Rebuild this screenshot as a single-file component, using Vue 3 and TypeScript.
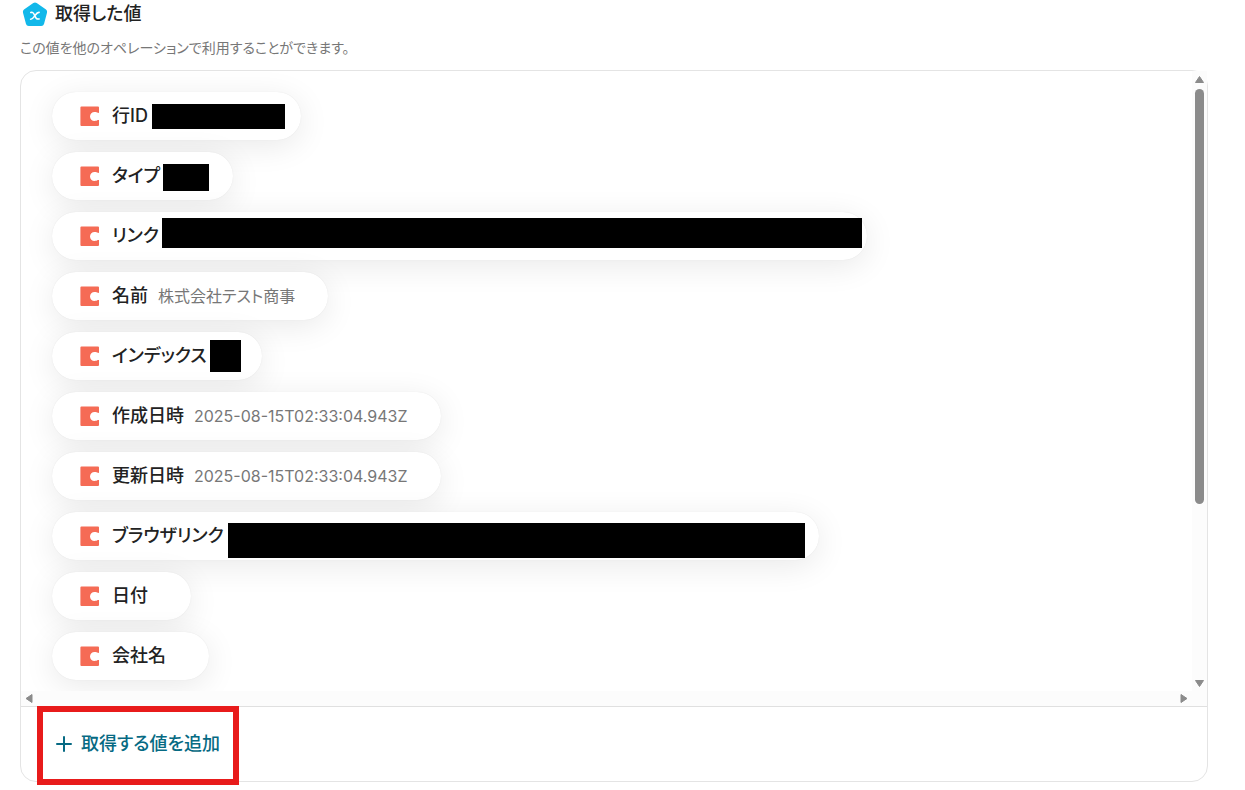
<script setup lang="ts">
interface Mask {
  left: number
  top: number
  width: number
  height: number
}

interface FetchedValue {
  label: string
  value?: string
  mask?: Mask
  minWidth?: number
}

const values: FetchedValue[] = [
  { label: '行ID', mask: { left: 100, top: 12, width: 133, height: 25 }, minWidth: 249 },
  { label: 'タイプ', mask: { left: 111, top: 12, width: 46, height: 27 }, minWidth: 181 },
  { label: 'リンク', mask: { left: 110, top: 6, width: 700, height: 30 }, minWidth: 815 },
  { label: '名前', value: '株式会社テスト商事' },
  { label: 'インデックス', mask: { left: 158, top: 8, width: 31, height: 32 }, minWidth: 210 },
  { label: '作成日時', value: '2025-08-15T02:33:04.943Z' },
  { label: '更新日時', value: '2025-08-15T02:33:04.943Z' },
  { label: 'ブラウザリンク', mask: { left: 176, top: 11, width: 577, height: 35 }, minWidth: 767 },
  { label: '日付' },
  { label: '会社名' },
]

function pillStyle(item: FetchedValue) {
  return item.minWidth ? { minWidth: `${item.minWidth}px` } : undefined
}

function maskStyle(mask: Mask) {
  return {
    left: `${mask.left}px`,
    top: `${mask.top}px`,
    width: `${mask.width}px`,
    height: `${mask.height}px`,
  }
}
</script>

<template>
  <main class="page">
    <header class="heading">
      <svg class="badge" viewBox="0 0 26 26" aria-hidden="true">
        <path
          d="M11.3 2.1Q13 1 14.7 2.1L24 8.6Q25.6 9.8 25 11.7L22 22.9Q21.4 25 19.3 25H6.7Q4.6 25 4 22.9L1 11.7Q.4 9.8 2 8.6Z"
          fill="#12b8ea"
        />
        <path
          d="M8.8 11.5C10.8 10.9 11.5 11.7 12.8 14.7C14 17.8 14.9 18.6 17 17.9M17.1 11.4C15.3 11.2 14.1 13 12.8 14.8C11.4 16.8 10.4 18.4 8.6 18.2"
          fill="none"
          stroke="#fff"
          stroke-width="1.6"
          stroke-linecap="round"
        />
      </svg>
      <h1 class="title">取得した値</h1>
    </header>
    <p class="note">この値を他のオペレーションで利用することができます。</p>

    <section class="card">
      <div class="viewport">
        <ul class="list">
          <li v-for="item in values" :key="item.label" class="pill" :style="pillStyle(item)">
            <svg class="icon" viewBox="0 0 20 20" aria-hidden="true">
              <path
                d="M1.4 .5H18Q19 .5 19 1.5V6.8C18 7.2 17.2 6.3 15.6 6C12.6 5.4 10 7.4 10 10.4C10 13.4 12.6 15.4 15.6 14.8C17.2 14.5 18 13.6 19 14V19Q19 20 18 20H1.4Q.4 20 .4 19V1.5Q.4 .5 1.4 .5Z"
                fill="#f56b55"
              />
            </svg>
            <span class="label">{{ item.label }}</span>
            <span v-if="item.value" class="value">{{ item.value }}</span>
            <span v-if="item.mask" class="mask" :style="maskStyle(item.mask)"></span>
          </li>
        </ul>
        <div class="vbar" aria-hidden="true">
          <svg class="arrow" viewBox="0 0 15 17"><path d="M7.5 5.5L11.5 11.5H3.5Z" /></svg>
          <div class="track"><div class="thumb"></div></div>
          <svg class="arrow" viewBox="0 0 15 17"><path d="M3.5 6.5H11.5L7.5 12.5Z" /></svg>
        </div>
        <div class="hbar" aria-hidden="true">
          <svg class="arrow-x" viewBox="0 0 17 15"><path d="M5 7.5L11 3.5V11.5Z" /></svg>
          <svg class="arrow-x" viewBox="0 0 17 15"><path d="M6 3.5L12 7.5L6 11.5Z" /></svg>
        </div>
        <div class="corner"></div>
      </div>
      <footer class="footer">
        <div class="highlight">
          <button type="button" class="add">
            <svg class="plus" viewBox="0 0 16 16" aria-hidden="true">
              <path d="M8 1V15M1 8H15" fill="none" stroke="#066a83" stroke-width="2" stroke-linecap="round" />
            </svg>
            <span>取得する値を追加</span>
          </button>
        </div>
      </footer>
    </section>
  </main>
</template>

<style>
body {
  margin: 0;
  background: #fff;
}
</style>

<style scoped>
.page {
  padding: 0 37px 8px 20px;
  font-family: Inter, 'Noto Sans CJK JP', sans-serif;
  font-feature-settings: 'palt';
  color: #222;
}

.heading {
  display: flex;
  align-items: center;
  gap: 7px;
  height: 28px;
  padding-left: 2px;
}

.badge {
  width: 26px;
  height: 26px;
}

.title {
  margin: 0;
  font-size: 18px;
  line-height: 28px;
  font-weight: 500;
}

.note {
  margin: 8px 0 10px;
  font-size: 14px;
  line-height: 24px;
  color: #777;
}

.card {
  border: 1px solid #e4e4e4;
  border-radius: 16px;
}

.viewport {
  display: grid;
  grid-template-columns: minmax(0, 1fr) 15px;
  grid-template-rows: auto 15px;
  border-bottom: 1px solid #e0e0e0;
}

.list {
  display: flex;
  flex-direction: column;
  align-items: flex-start;
  gap: 12px;
  margin: 0;
  padding: 21px 31px 11px;
  border-top-left-radius: 15px;
  list-style: none;
  overflow: hidden;
}

.pill {
  position: relative;
  display: flex;
  align-items: center;
  box-sizing: border-box;
  height: 48px;
  padding: 0 33px 0 28px;
  border-radius: 24px;
  background: #fff;
  box-shadow: 0 0 1px rgba(0, 0, 0, 0.1), 0 6px 32px rgba(0, 0, 0, 0.09);
  white-space: nowrap;
}

.icon {
  width: 20px;
  height: 20px;
  margin-right: 12px;
}

.label {
  margin-right: 10px;
  font-size: 18px;
  line-height: 24px;
  font-weight: 500;
}

.value {
  font-size: 16px;
  line-height: 24px;
  color: #777;
}

.mask {
  position: absolute;
  background: #000;
}

.vbar {
  display: flex;
  flex-direction: column;
  background: #fcfcfc;
}

.arrow {
  width: 15px;
  height: 17px;
}

.arrow-x {
  width: 17px;
  height: 15px;
}

.arrow path,
.arrow-x path {
  fill: #8b8b8b;
  stroke: #8b8b8b;
  stroke-width: 1;
  stroke-linejoin: round;
}

.track {
  flex: 1;
  padding: 1px 3px;
}

.thumb {
  height: 71%;
  border-radius: 5px;
  background: #8b8b8b;
}

.hbar {
  display: flex;
  justify-content: space-between;
  background: #fcfcfc;
}

.corner {
  background: #fcfcfc;
}

.footer {
  display: flex;
  height: 74px;
  padding-left: 16px;
}

.highlight {
  position: relative;
  display: flex;
  align-items: center;
}

.highlight::after {
  content: '';
  position: absolute;
  inset: -1px 0 -4px;
  border: 6px solid #e81b1b;
  pointer-events: none;
}

.add {
  display: flex;
  align-items: center;
  gap: 9px;
  padding: 0 19px;
  border: 0;
  background: transparent;
  color: #066a83;
  font: inherit;
  font-size: 18px;
  line-height: 28px;
  font-weight: 500;
  cursor: pointer;
}

.plus {
  width: 16px;
  height: 16px;
}
</style>
